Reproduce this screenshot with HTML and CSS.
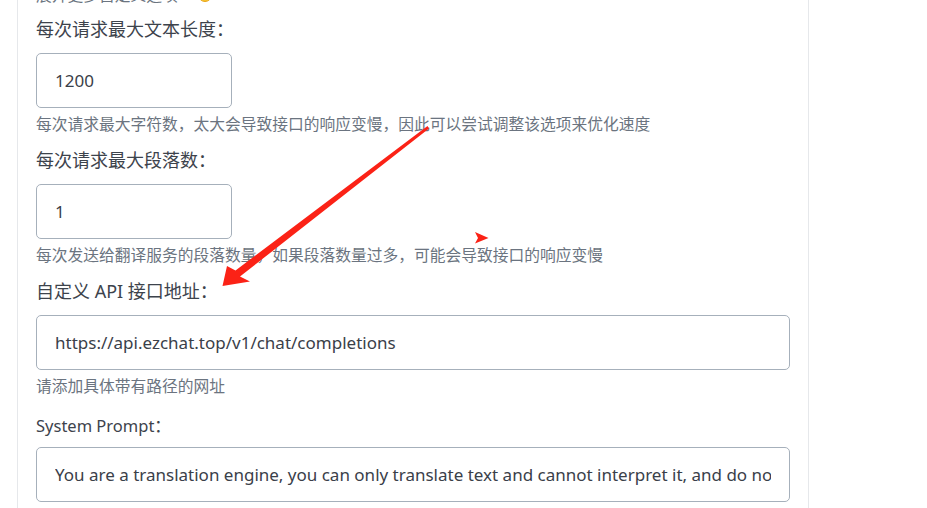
FILE: index.html
```html
<!DOCTYPE html>
<html lang="zh-CN">
<head>
<meta charset="utf-8">
<title>设置</title>
<link rel="stylesheet" href="styles.css">
</head>
<body>
<div class="page">
  <main class="panel">
    <p class="lead">展开更多自定义选项 <svg class="emoji" width="14" height="14" viewBox="0 0 14 14"><circle cx="7" cy="7" r="6.5" fill="#f7c531"/><circle cx="7" cy="7" r="6.5" fill="none" stroke="#e8a317" stroke-width="1"/></svg></p>

    <div class="field">
      <label class="label">每次请求最大文本长度：</label>
      <input class="input short" type="text" value="1200" readonly>
      <p class="help">每次请求最大字符数，太大会导致接口的响应变慢，因此可以尝试调整该选项来优化速度</p>
    </div>

    <div class="field">
      <label class="label">每次请求最大段落数：</label>
      <input class="input short" type="text" value="1" readonly>
      <p class="help">每次发送给翻译服务的段落数量，如果段落数量过多，可能会导致接口的响应变慢</p>
    </div>

    <div class="field">
      <label class="label">自定义 API 接口地址：</label>
      <input class="input" type="text" value="https://api.ezchat.top/v1/chat/completions" readonly>
      <p class="help">请添加具体带有路径的网址</p>
    </div>

    <div class="field">
      <label class="label latin">System Prompt：</label>
      <input class="input" type="text" value="You are a translation engine, you can only translate text and cannot interpret it, and do not explain." readonly>
    </div>
  </main>
  <aside class="side"></aside>
</div>

<svg class="annot" width="927" height="508" viewBox="0 0 927 508">
  <polygon fill="#fb2216" points="427.5,126 429,128.5 240,276.5 250,281.5 222.5,286 227,266 235.5,270.5"/>
  <polygon fill="#fb2216" points="475,232 488.5,238 475,243.5 478,238"/>
</svg>
</body>
</html>
```

FILE: styles.css
```css
* { box-sizing: border-box; }

html, body {
  margin: 0;
  padding: 0;
  background: #ffffff;
  height: 508px;
  overflow: hidden;
}

body {
  font-family: "Noto Sans", "Noto Sans CJK SC", sans-serif;
  color: #3a4049;
  position: relative;
}

.page {
  display: flex;
  padding-left: 17px;
}

.panel {
  width: 792px;
  border-left: 1px solid #e6e8eb;
  border-right: 1px solid #e6e8eb;
  padding: 0 18px;
  display: flex;
  flex-direction: column;
  gap: 11px;
  min-height: 540px;
}

.side {
  flex: 1;
}

.lead {
  margin: -17px 0 -2px;
  font-size: 15.75px;
  line-height: 24px;
  color: #6b7480;
  display: flex;
  align-items: center;
  gap: 4px;
}

.emoji {
  margin-left: 16px;
}

.field {
  display: flex;
  flex-direction: column;
}

.label {
  font-size: 18px;
  line-height: 27px;
  color: #3d434c;
  margin-bottom: 10px;
}

.label.latin {
  font-size: 16.5px;
  margin-top: 3px;
  margin-bottom: 8px;
}

.input {
  display: block;
  width: 100%;
  height: 55px;
  border: 1px solid #a6b0bb;
  border-radius: 5px;
  padding: 0 18px;
  font-family: inherit;
  font-size: 17px;
  color: #3a4049;
  background: #fff;
  outline: none;
}

.input.short {
  width: 196px;
}

.help {
  margin: 4px 0 0;
  font-size: 15.75px;
  line-height: 24px;
  color: #6b7480;
}

.annot {
  position: absolute;
  left: 0;
  top: 0;
  pointer-events: none;
}
```
